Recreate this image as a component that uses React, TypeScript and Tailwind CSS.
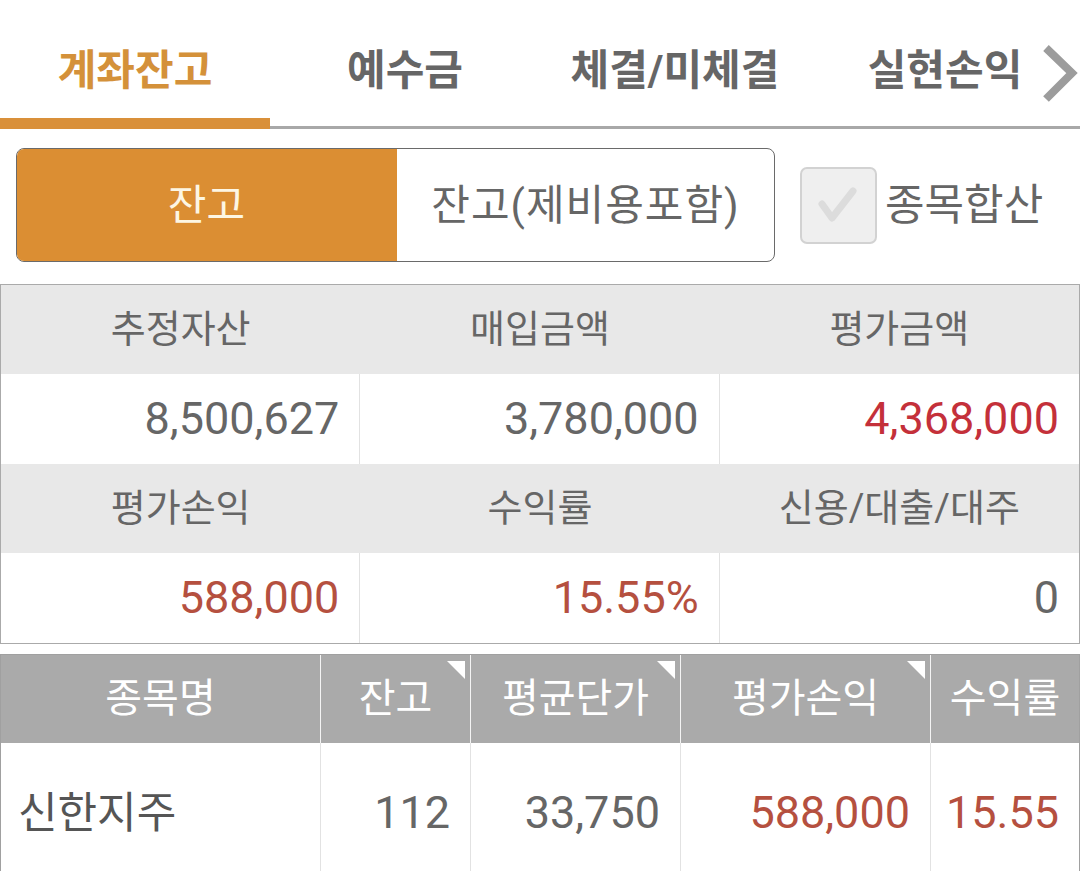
import React from "react";

const FONT = { fontFamily: 'Roboto, "Noto Sans CJK KR", sans-serif' };

const tabs = ["계좌잔고", "예수금", "체결/미체결", "실현손익"];

function TabBar() {
  return (
    <div className="relative flex border-b-[3px] border-[#a8a8a8]">
      {tabs.map((t, i) => (
        <div key={t} className="flex w-[270px] flex-col">
          <div
            className={`flex h-[118px] items-center justify-center pt-[22px] text-[42px] font-bold ${
              i === 0 ? "text-[#d4913a]" : "text-[#666666]"
            }`}
          >
            {t}
          </div>
          <div className={`h-[8px] ${i === 0 ? "bg-[#d9903a] -mb-[3px] h-[11px]" : ""}`} />
        </div>
      ))}
      <svg
        className="absolute right-[2px] top-[44px]"
        width="36"
        height="60"
        viewBox="0 0 36 60"
      >
        <polyline
          points="4,4 30,29 4,55"
          fill="none"
          stroke="#9c9c9c"
          strokeWidth="8"
          strokeLinejoin="miter"
        />
      </svg>
    </div>
  );
}

function Controls() {
  return (
    <div className="mt-[19px] flex items-center px-[16px]">
      <div className="flex h-[114px] w-[759px] overflow-hidden rounded-[8px] border border-[#6a6a6a]">
        <div className="-my-px -ml-px flex w-[381px] items-center justify-center bg-[#db8e33] text-[42px] text-[#fdf6e3]">
          잔고
        </div>
        <div className="flex flex-1 items-center justify-center text-[42px] tracking-[1px] text-[#666666]">
          잔고(제비용포함)
        </div>
      </div>
      <div className="ml-[25px] flex h-[77px] w-[77px] items-center justify-center rounded-[7px] border-2 border-[#d2d2d2] bg-[#efefef]">
        <svg width="44" height="40" viewBox="0 0 44 40">
          <polyline
            points="5,19 15,33 36,6"
            fill="none"
            stroke="#dcdcdc"
            strokeWidth="7"
            strokeLinecap="round"
            strokeLinejoin="round"
          />
        </svg>
      </div>
      <div className="ml-[8px] text-[43px] text-[#666666]">종목합산</div>
    </div>
  );
}

type Cell = { v: string; c?: string };

function SummaryHeader({ labels }: { labels: string[] }) {
  return (
    <div className="grid h-[89px] grid-cols-3 bg-[#e8e8e8]">
      {labels.map((l) => (
        <div key={l} className="flex items-center justify-center text-[38px] text-[#666666]">
          {l}
        </div>
      ))}
    </div>
  );
}

function SummaryValues({ cells }: { cells: Cell[] }) {
  return (
    <div className="grid h-[90px] grid-cols-3 bg-white">
      {cells.map((cell, i) => (
        <div
          key={i}
          className={`flex items-center justify-end pr-[20px] text-[45px] ${
            i < 2 ? "border-r border-[#e2e2e2]" : ""
          }`}
          style={{ color: cell.c ?? "#666666" }}
        >
          {cell.v}
        </div>
      ))}
    </div>
  );
}

function Summary() {
  return (
    <div className="mt-[22px] border border-[#aaaaaa]">
      <SummaryHeader labels={["추정자산", "매입금액", "평가금액"]} />
      <SummaryValues
        cells={[{ v: "8,500,627" }, { v: "3,780,000" }, { v: "4,368,000", c: "#c4303a" }]}
      />
      <SummaryHeader labels={["평가손익", "수익률", "신용/대출/대주"]} />
      <SummaryValues
        cells={[{ v: "588,000", c: "#b5503f" }, { v: "15.55%", c: "#b5503f" }, { v: "0" }]}
      />
    </div>
  );
}

const cols = [
  { label: "종목명", w: "w-[320px]", sort: false },
  { label: "잔고", w: "w-[150px]", sort: true },
  { label: "평균단가", w: "w-[210px]", sort: true },
  { label: "평가손익", w: "w-[250px]", sort: true },
  { label: "수익률", w: "flex-1", sort: false },
];

function Holdings() {
  return (
    <div className="mt-[10px] border-x border-t border-[#a0a0a0]">
      <div className="flex h-[88px] bg-[#aaaaaa]">
        {cols.map((c, i) => (
          <div
            key={c.label}
            className={`relative flex items-center justify-center text-[40px] text-white ${c.w} ${
              i < cols.length - 1 ? "border-r border-[#f4f4f4]" : ""
            }`}
          >
            {c.label}
            {c.sort && (
              <svg className="absolute right-[5px] top-[6px]" width="18" height="18" viewBox="0 0 18 18">
                <polygon points="0,0 18,0 18,18" fill="#ffffff" />
              </svg>
            )}
          </div>
        ))}
      </div>
      <div className="flex h-[140px] bg-white text-[45px]">
        <div className="flex w-[320px] items-center border-r border-[#e2e2e2] pl-[17px] text-[43px] text-[#555555]">
          신한지주
        </div>
        <div className="flex w-[150px] items-center justify-end border-r border-[#e2e2e2] pr-[20px] text-[#666666]">
          112
        </div>
        <div className="flex w-[210px] items-center justify-end border-r border-[#e2e2e2] pr-[20px] text-[#666666]">
          33,750
        </div>
        <div className="flex w-[250px] items-center justify-end border-r border-[#e2e2e2] pr-[20px] text-[#b5503f]">
          588,000
        </div>
        <div className="flex flex-1 items-center justify-end pr-[20px] text-[#b5503f]">15.55</div>
      </div>
    </div>
  );
}

export default function App() {
  return (
    <div className="h-[871px] w-[1080px] overflow-hidden bg-white" style={FONT}>
      <TabBar />
      <Controls />
      <Summary />
      <Holdings />
    </div>
  );
}
